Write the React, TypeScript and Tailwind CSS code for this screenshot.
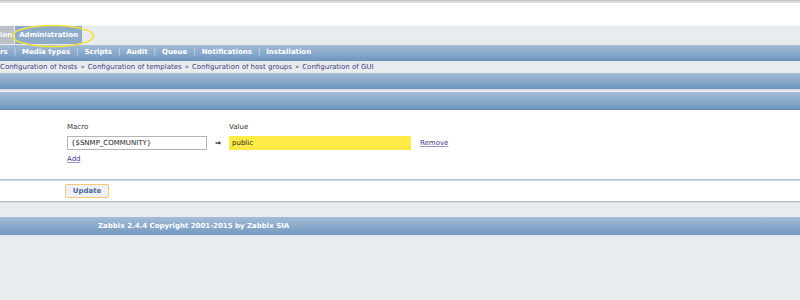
import React from "react";

const blueBar = "bg-linear-to-b from-[#a5bcd7] to-[#7298c0]";

function SubMenu() {
  const items = ["rs", "Media types", "Scripts", "Audit", "Queue", "Notifications", "Installation"];
  return (
    <div className={`h-[16px] ${blueBar} border-b border-[#6f8fb3] flex items-center text-white font-bold`}>
      {items.map((it, i) => (
        <React.Fragment key={it}>
          {i > 0 && <span className="px-[6px] font-normal text-[#dbe5f0]">|</span>}
          <span>{it}</span>
        </React.Fragment>
      ))}
    </div>
  );
}

export default function App() {
  return (
    <div className="w-[800px] h-[300px] overflow-hidden bg-[#e9ecef] font-['DejaVu_Sans',sans-serif] text-[7px] leading-[9px]">
      {/* top strip */}
      <div className="h-[3px] border-t border-[#c6c6c6] bg-[#dcdcdc]" />
      <div className="h-[22px] bg-white" />

      {/* main tabs */}
      <div className="relative h-[20px] bg-[#e9ecef] border-t border-[#f3f5f7] flex items-stretch pb-px">
        <div className="bg-[#bcbfc3] text-white font-bold flex items-center pr-[2px]">ion</div>
        <div className="bg-[#8eacca] text-white font-bold flex items-center px-[4px] ml-px">Administration</div>
        <svg className="absolute left-[11px] top-[-2px]" width="84" height="24" viewBox="0 0 84 24">
          <ellipse cx="42" cy="12" rx="40.5" ry="10.5" fill="none" stroke="#f2e23c" strokeWidth="1.6" />
        </svg>
      </div>

      <SubMenu />

      {/* breadcrumb */}
      <div className="h-[12px] bg-[#e9ecef] flex items-center text-[#3d3d86]">
        <span>Configuration of hosts</span>
        <span className="px-[3px] text-[#555]">»</span>
        <span>Configuration of templates</span>
        <span className="px-[3px] text-[#555]">»</span>
        <span>Configuration of host groups</span>
        <span className="px-[3px] text-[#555]">»</span>
        <span>Configuration of GUI</span>
      </div>

      {/* title bars */}
      <div className={`h-[16px] ${blueBar} border-b border-[#6f8fb3]`} />
      <div className="h-[3px] bg-[#dae1e9] border-b border-[#f4f6f8]" />
      <div className={`h-[18px] ${blueBar} border-b border-[#6a8ab0]`} />

      {/* form */}
      <div className="h-[69px] bg-white pl-[67px] pt-[13px]">
        <div className="flex text-[#333]">
          <div className="w-[162px]">Macro</div>
          <div>Value</div>
        </div>
        <div className="flex items-center mt-[4px]">
          <div className="w-[140px] h-[14px] border border-[#b5b5b5] flex items-center pl-[3px] text-[#222]">
            {"{$SNMP_COMMUNITY}"}
          </div>
          <div className="w-[22px] flex justify-center font-bold text-black">⇒</div>
          <div className="w-[182px] h-[14px] bg-[#ffea47] flex items-center pl-[3px] text-[#222]">public</div>
          <a className="ml-[9px] text-[#3d3d86] underline decoration-[#9a9acb]">Remove</a>
        </div>
        <a className="inline-block mt-[5px] text-[#3d3d86] underline decoration-[#9a9acb]">Add</a>
      </div>

      <div className="h-[2px] border-t border-[#b1bfcf] bg-[#d3dbe5]" />
      <div className="h-[20px] bg-white pl-[65px] flex items-center">
        <button className="w-[44px] h-[14px] border border-[#f5c678] rounded-[2px] bg-[#eef2f6] text-[#4a6b9a] font-bold">
          Update
        </button>
      </div>
      <div className="h-[2px] border-t border-[#b1bfcf] bg-[#d3dbe5]" />

      <div className="h-[14px] bg-[#e9ecef]" />
      <div className={`h-[19px] ${blueBar} border-b border-[#dfe5ec] flex items-center pl-[98px] text-white font-bold`}>
        Zabbix 2.4.4 Copyright 2001-2015 by Zabbix SIA
      </div>
    </div>
  );
}
